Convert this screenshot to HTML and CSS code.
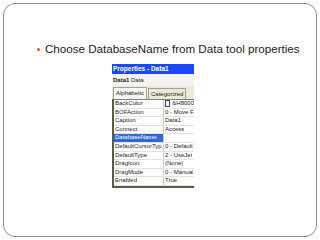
FILE: index.html
```html
<!DOCTYPE html>
<html>
<head>
<meta charset="utf-8">
<link rel="stylesheet" href="styles.css">
</head>
<body>
<div class="slide">
  <ul class="bullets">
    <li>Choose DatabaseName from Data tool properties</li>
  </ul>
  <div class="props">
    <div class="title">Properties - Data1</div>
    <div class="obj"><b>Data1</b> Data</div>
    <div class="tabs">
      <span class="tab active">Alphabetic</span>
      <span class="tab">Categorized</span>
    </div>
    <div class="grid">
      <div class="row"><span class="name">BackColor</span><span class="val"><i class="swatch"></i>&amp;H8000</span></div>
      <div class="row"><span class="name">BOFAction</span><span class="val">0 - Move Fi</span></div>
      <div class="row"><span class="name">Caption</span><span class="val">Data1</span></div>
      <div class="row"><span class="name">Connect</span><span class="val">Access</span></div>
      <div class="row sel"><span class="name">DatabaseName</span><span class="val"></span></div>
      <div class="row"><span class="name">DefaultCursorTyp</span><span class="val">0 - Default</span></div>
      <div class="row"><span class="name">DefaultType</span><span class="val">2 - UseJet</span></div>
      <div class="row"><span class="name">DragIcon</span><span class="val">(None)</span></div>
      <div class="row"><span class="name">DragMode</span><span class="val">0 - Manual</span></div>
      <div class="row"><span class="name">Enabled</span><span class="val">True</span></div>
    </div>
  </div>
</div>
</body>
</html>
```
FILE: styles.css
```css
html, body {
  margin: 0;
  padding: 0;
  background: #ffffff;
}
.slide {
  box-sizing: border-box;
  margin: 3px;
  width: 314px;
  height: 234px;
  border: 1px solid #8e8e8e;
  border-radius: 12px;
  padding-top: 38px;
  font-family: "Liberation Sans", Arial, sans-serif;
}
.bullets {
  margin: 0;
  padding: 0 0 0 41px;
  list-style: none;
}
.bullets li {
  position: relative;
  font-size: 11.6px;
  line-height: 14px;
  color: #1a1a1a;
  white-space: nowrap;
}
.bullets li::before {
  content: "";
  position: absolute;
  left: -8px;
  top: 6px;
  width: 3px;
  height: 3px;
  border-radius: 50%;
  background: #e0502a;
}
.props {
  margin: 8px 0 0 108px;
  width: 82px;
  font-size: 6px;
  font-family: "Liberation Sans", Tahoma, sans-serif;
  color: #222;
  overflow: hidden;
}
.title {
  height: 10px;
  line-height: 10px;
  background: #1c48f0;
  color: #fff;
  font-weight: bold;
  font-size: 6.5px;
  padding-left: 1px;
  white-space: nowrap;
}
.obj {
  height: 12px;
  line-height: 13px;
  background: #f4f3ee;
  padding-left: 1px;
  white-space: nowrap;
}
.tabs {
  display: flex;
  height: 13px;
  align-items: flex-end;
  background: #ece9d8;
  padding-left: 1px;
  gap: 1px;
}
.tab {
  height: 10px;
  line-height: 10px;
  padding: 0 2px;
  border: 1px solid #a0a0a0;
  border-bottom: none;
  background: #ece9d8;
  white-space: nowrap;
}
.tab.active {
  background: #f7f6f0;
  height: 11px;
}
.grid {
  border-left: 2px solid #5a5a48;
  border-top: 1px solid #808080;
  border-bottom: 2px solid #5a5a48;
  background: #fff;
}
.row {
  display: flex;
  height: 7.6px;
  line-height: 7.6px;
  border-bottom: 1px solid #e2e2e2;
  white-space: nowrap;
}
.name {
  width: 48px;
  flex: none;
  padding-left: 1px;
  border-right: 1px solid #c8c8c8;
  overflow: hidden;
}
.val {
  padding-left: 1px;
  overflow: hidden;
  display: flex;
  align-items: center;
  gap: 2px;
}
.row.sel .name {
  background: #3168d5;
  color: #fff;
}
.swatch {
  width: 5px;
  height: 5px;
  border: 1px solid #444;
  background: #fff;
}
```
